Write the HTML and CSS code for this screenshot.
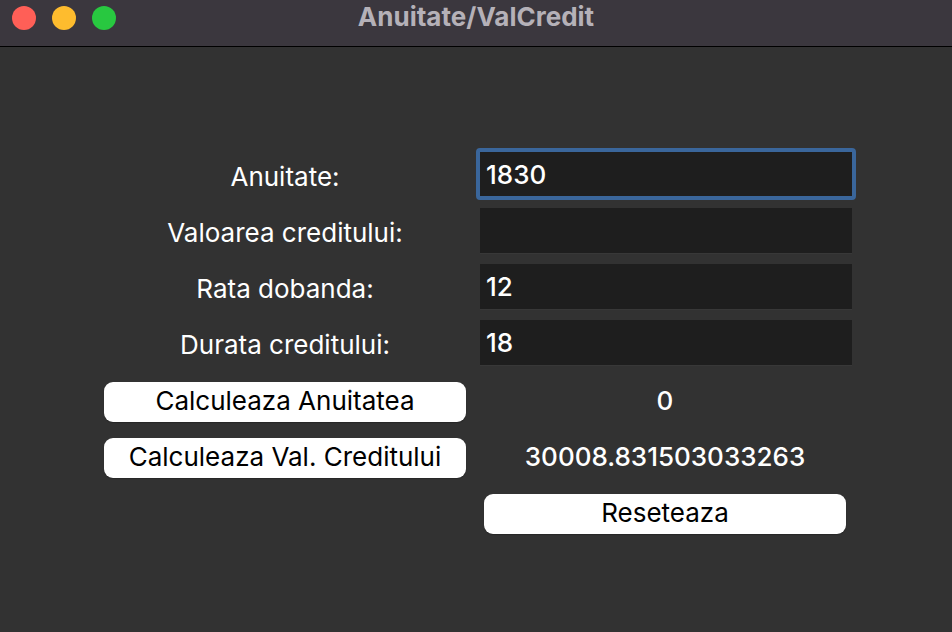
FILE: index.html
```html
<!DOCTYPE html>
<html lang="ro">
<head>
<meta charset="utf-8">
<title>Anuitate/ValCredit</title>
<link rel="stylesheet" href="styles.css">
</head>
<body>
<header class="titlebar">
  <div class="controls">
    <button class="dot close" type="button" aria-label="Close"></button>
    <button class="dot minimize" type="button" aria-label="Minimize"></button>
    <button class="dot zoom" type="button" aria-label="Zoom"></button>
  </div>
  <h1 class="title">Anuitate/ValCredit</h1>
</header>
<main class="content">
  <form class="form">
    <label class="label" for="anuitate">Anuitate:</label>
    <input class="field active" id="anuitate" type="text" value="1830">
    <label class="label" for="valoare">Valoarea creditului:</label>
    <input class="field" id="valoare" type="text" value="">
    <label class="label" for="rata">Rata dobanda:</label>
    <input class="field" id="rata" type="text" value="12">
    <label class="label" for="durata">Durata creditului:</label>
    <input class="field" id="durata" type="text" value="18">
    <button class="action" type="button">Calculeaza Anuitatea</button>
    <output class="result">0</output>
    <button class="action" type="button">Calculeaza Val. Creditului</button>
    <output class="result">30008.831503033263</output>
    <button class="action reset" type="button">Reseteaza</button>
  </form>
</main>
</body>
</html>
```
FILE: styles.css
```css
* {
  box-sizing: border-box;
}

body {
  margin: 0;
  min-height: 100vh;
  display: flex;
  flex-direction: column;
  background: #323232;
  color: #fff;
  font: 26px/32px Inter, sans-serif;
}

.titlebar {
  display: grid;
  grid-template-columns: 1fr auto 1fr;
  align-items: start;
  padding: 0 12px 12px;
  background: #3b373e;
  border-bottom: 1px solid #000;
}

.controls {
  display: flex;
  gap: 16px;
  padding-top: 6px;
}

.dot {
  width: 24px;
  height: 24px;
  padding: 0;
  border: 0;
  border-radius: 50%;
}

.close { background: #ff5f57; }
.minimize { background: #febc2e; }
.zoom { background: #28c840; }

.title {
  margin: 0;
  color: #b5b1b8;
  font-size: 26px;
  line-height: 34px;
  font-weight: 700;
}

.content {
  flex: 1;
  display: flex;
  align-items: center;
  justify-content: center;
  padding-top: 9px;
}

.form {
  display: grid;
  grid-template-columns: minmax(0, 380px) minmax(0, 380px);
  grid-auto-rows: 56px;
  align-items: center;
  text-align: center;
}

.label,
.result {
  padding: 2px 2px 0 0;
}

.result {
  font-weight: 500;
}

.field {
  align-self: start;
  min-width: 0;
  height: 45px;
  margin: 4px 4px 0;
  padding: 0 6px;
  border: 0;
  background: #1e1e1e;
  box-shadow: 0 1px 0 #383838;
  color: inherit;
  font: inherit;
  font-weight: 500;
  outline: 0;
}

.active {
  height: 52px;
  margin: 0;
  border: 4px solid #3a669b;
  border-radius: 4px;
  box-shadow: none;
}

.action {
  height: 40px;
  margin: 4px 10px 0 8px;
  padding: 0 0 2px;
  border: 0;
  border-radius: 9px;
  background: #fff;
  box-shadow: 0 1px 1px #262626;
  color: #000;
  font: inherit;
}

.reset {
  grid-column: 2;
}
```
